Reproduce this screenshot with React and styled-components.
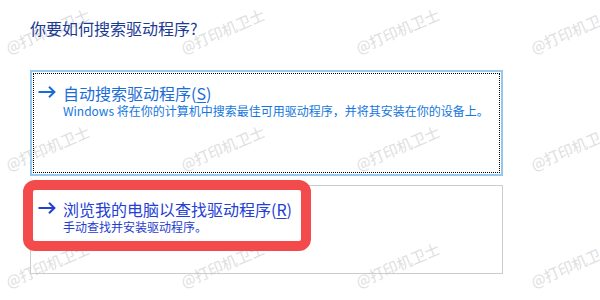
import React from "react";
import styled, { createGlobalStyle } from "styled-components";

const Global = createGlobalStyle`
  html, body { margin: 0; padding: 0; background: #ffffff; }
  body { font-family: "Noto Sans CJK SC", "Noto Sans", sans-serif; }
`;

const Page = styled.div`
  position: relative;
  width: 600px;
  height: 300px;
  overflow: hidden;
  background: #ffffff;
  box-sizing: border-box;
  padding: 17px 0 0 30px;
`;

const Watermarks = styled.div`
  position: absolute;
  left: -40px;
  top: -28px;
  display: grid;
  grid-template-columns: repeat(4, 175px);
  grid-template-rows: repeat(3, 117px);
  place-items: center;
  pointer-events: none;
  z-index: 0;
`;

const Mark = styled.span`
  display: block;
  transform: rotate(-23deg);
  font-family: "Noto Sans CJK SC", sans-serif;
  font-size: 15px;
  line-height: 18px;
  color: #dedede;
  white-space: nowrap;
`;

const Content = styled.div`
  position: relative;
  z-index: 1;
  width: 473px;
`;

const Heading = styled.div`
  font-size: 16px;
  line-height: 22px;
  color: #1b3a94;
  margin-bottom: 31px;
`;

const FocusBox = styled.div`
  box-sizing: border-box;
  height: 106px;
  border: 2px solid #95c7ef;
  padding: 1px;
`;

const Dotted = styled.div`
  box-sizing: border-box;
  height: 100%;
  border: 1px dotted #000000;
  padding: 9px 0 0 4px;
`;

const PlainBox = styled.div`
  position: relative;
  box-sizing: border-box;
  height: 89px;
  margin-top: 9px;
  border: 1px solid #cccccc;
  padding: 13px 0 0 7px;
`;

const Highlight = styled.div`
  position: absolute;
  left: -8px;
  top: -6px;
  width: 288px;
  height: 71px;
  box-sizing: border-box;
  border: 10px solid #f34b4b;
  border-radius: 12px;
  pointer-events: none;
`;

const Option = styled.div`
  display: flex;
  align-items: flex-start;
  gap: 7px;
`;

const ArrowWrap = styled.div`
  width: 18px;
  height: 18px;
  display: flex;
  align-items: center;
  color: ${(p) => p.$color};
`;

const Texts = styled.div`
  display: flex;
  flex-direction: column;
`;

const OptTitle = styled.div`
  font-size: 16px;
  line-height: 20px;
  color: ${(p) => p.$color};
  white-space: nowrap;
`;

const OptDesc = styled.div`
  font-size: 12px;
  line-height: 16px;
  color: ${(p) => p.$color};
  white-space: nowrap;
`;

const Key = styled.span`
  text-decoration: underline;
  text-underline-offset: 2px;
`;

const Arrow = ({ color }) => (
  <ArrowWrap $color={color}>
    <svg width="18" height="12" viewBox="0 0 18 12" fill="none">
      <path d="M0.5 6H16.6" stroke="currentColor" strokeWidth="2" />
      <path d="M11 0.8L16.4 6L11 11.2" stroke="currentColor" strokeWidth="2" />
    </svg>
  </ArrowWrap>
);

export default function App() {
  const marks = Array.from({ length: 12 });
  return (
    <>
      <Global />
      <Page>
        <Watermarks>
          {marks.map((_, i) => (
            <Mark key={i}>@打印机卫士</Mark>
          ))}
        </Watermarks>
        <Content>
          <Heading>你要如何搜索驱动程序?</Heading>
          <FocusBox>
            <Dotted>
              <Option>
                <Arrow color="#1a6dd6" />
                <Texts>
                  <OptTitle $color="#1a6dd6">
                    自动搜索驱动程序(<Key>S</Key>)
                  </OptTitle>
                  <OptDesc $color="#1477de">
                    Windows 将在你的计算机中搜索最佳可用驱动程序，并将其安装在你的设备上。
                  </OptDesc>
                </Texts>
              </Option>
            </Dotted>
          </FocusBox>
          <PlainBox>
            <Option>
              <Arrow color="#2340d4" />
              <Texts>
                <OptTitle $color="#2340d4">
                  浏览我的电脑以查找驱动程序(<Key>R</Key>)
                </OptTitle>
                <OptDesc $color="#1f3dd0">手动查找并安装驱动程序。</OptDesc>
              </Texts>
            </Option>
            <Highlight />
          </PlainBox>
        </Content>
      </Page>
    </>
  );
}
